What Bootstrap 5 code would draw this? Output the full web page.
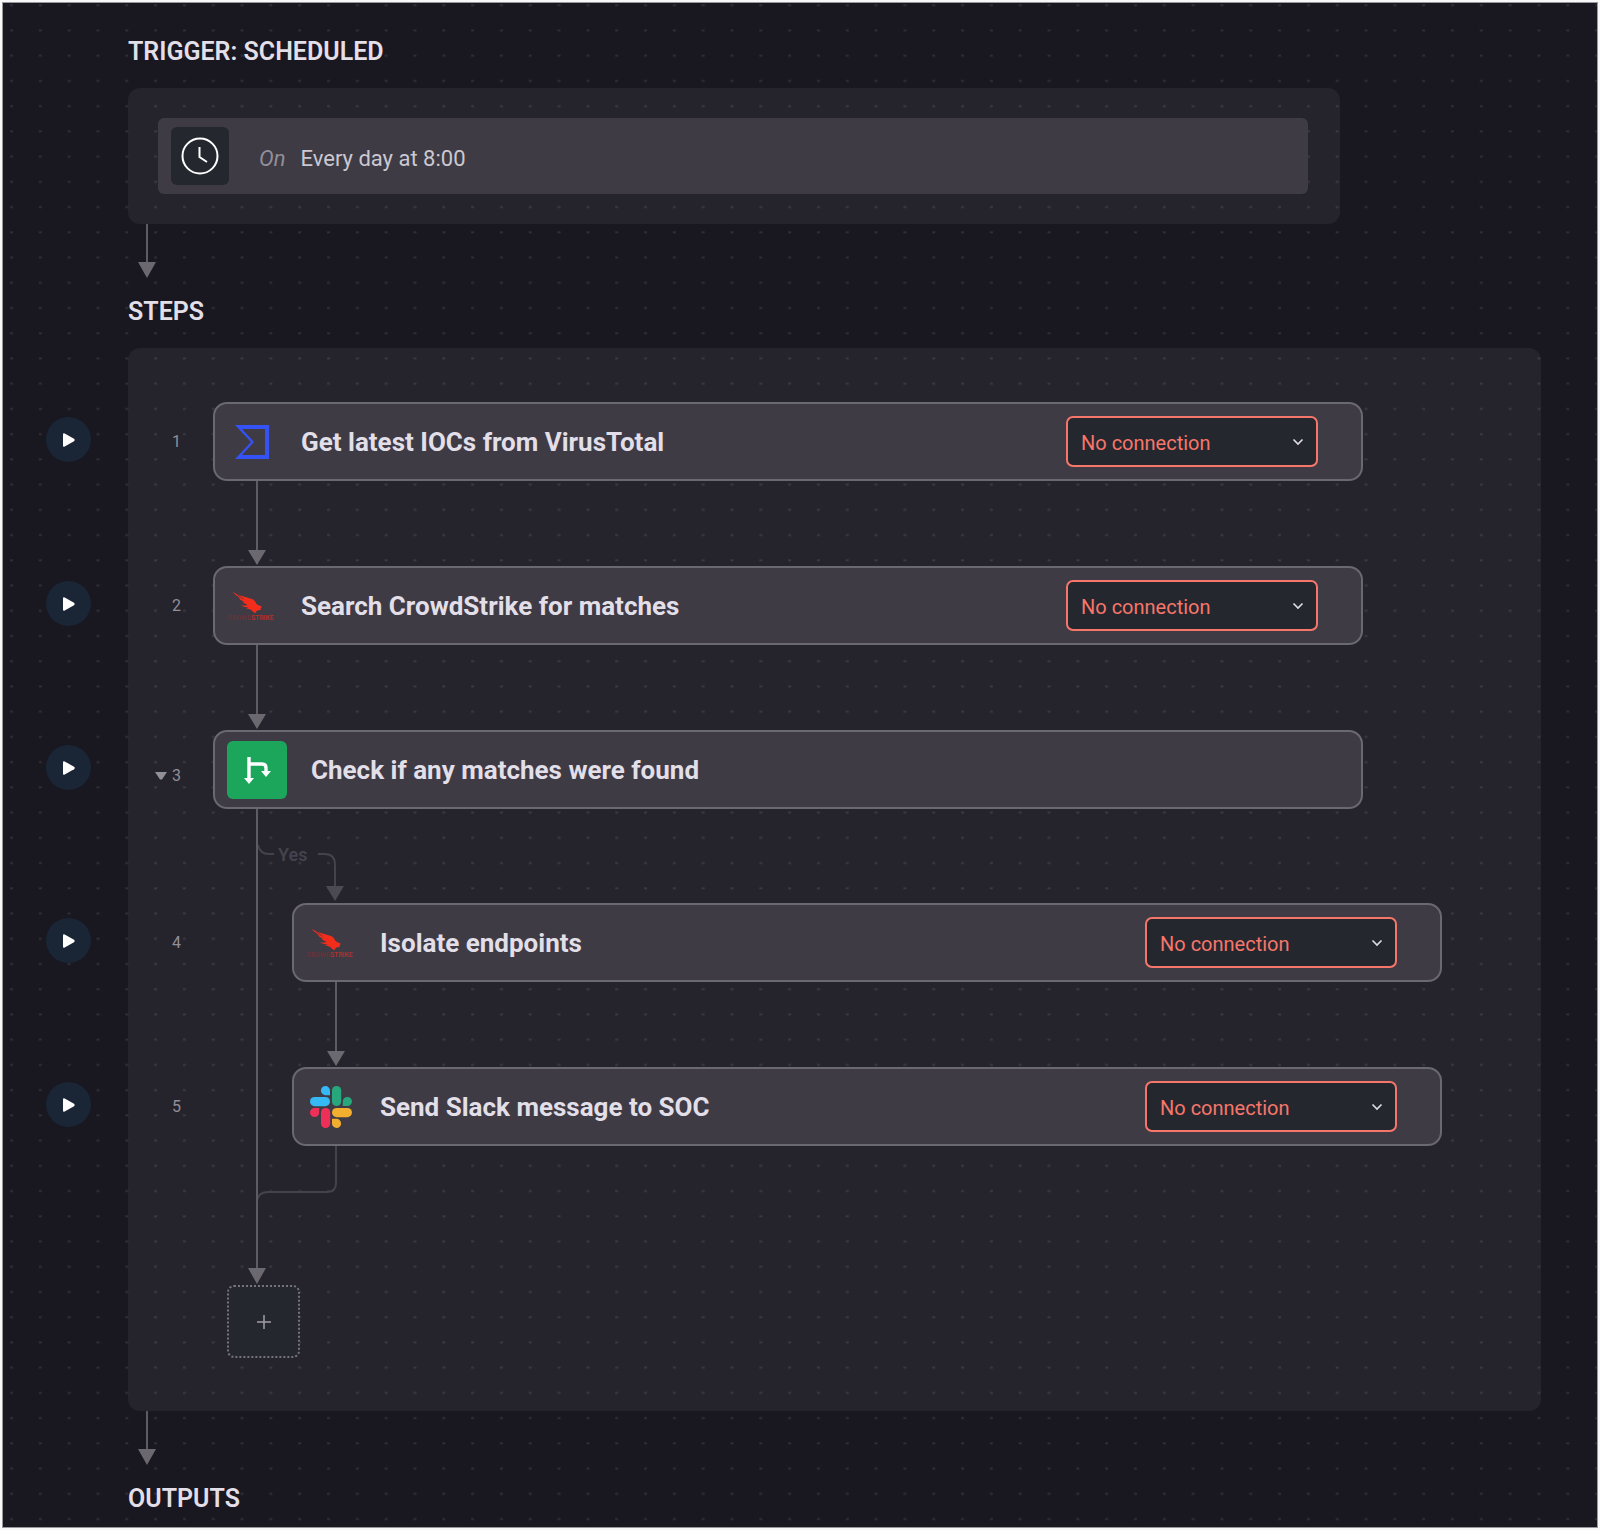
<!DOCTYPE html>
<html lang="en">
<head>
<meta charset="utf-8">
<meta name="viewport" content="width=device-width, initial-scale=1">
<title>Workflow editor</title>
<link href="https://cdn.jsdelivr.net/npm/bootstrap@5.3.0/dist/css/bootstrap.min.css" rel="stylesheet">
<style>
  :root {
    --ink: #e2dfe8;
    --muted: #918f98;
    --line: #5d5b64;
    --arrow: #6b696f;
    --faint: #44424c;
    --tile: #25272f;
    --alert: #f7766a;
  }
  body { background: #f8f8f8; padding: 2px; font-family: Roboto, "Liberation Sans", sans-serif; color: var(--ink); }
  .flow-canvas { background: #191720; border: 1px solid #98979b; min-height: calc(100vh - 4px); padding: 34px 56px 13px 125px; isolation: isolate; }
  .dot-grid { z-index: -1; }
  .flow-heading { font-size: 25px; line-height: 30px; font-weight: 600; margin-bottom: 21px; }
  .flow-panel { background: rgba(255, 255, 255, .055); border-radius: 12px; }
  .trigger-panel { padding: 30px 32px 30px 30px; margin-right: 201px; }
  .trigger-bar { background: #3e3b45; border-radius: 6px; height: 76px; padding: 0 13px; }
  .trigger-tile { width: 58px; height: 58px; border-radius: 6px; background: var(--tile); margin-right: 30px; }
  .trigger-text { font-size: 22px; line-height: 28px; color: #cbc8d1; padding-top: 5px; }
  .trigger-text em { color: var(--muted); margin-right: 15px; }
  .section-arrow { display: block; margin: 0 0 19px 10px; }
  .steps-panel { padding: 54px 0 53px; }
  .step-line { height: 79px; margin-left: -82px; padding-right: 178px; }
  .branch .step-line { padding-right: 99px; }
  .btn-play { width: 45px; height: 45px; padding: 0 0 0 1px; border: 0; background: #1a2636; margin-bottom: 4px; }
  .step-no { width: 90px; margin-right: 32px; font-size: 16px; line-height: 20px; color: var(--muted); }
  .branch .step-no { margin-right: 111px; }
  .step-toggle { font-size: 16px; line-height: 20px; color: var(--muted); padding: 13px 0 0; border: 0; gap: 5px; }
  .step-box { height: 79px; border: 2px solid #6a6871; border-radius: 14px; background: #3e3b45; padding: 0 43px 0 12px; gap: 24px; }
  .step-icon { width: 50px; }
  .step-icon-wide { width: 60px; height: 58px; border-radius: 6px; background: #1ca65c; }
  .step-title { font-size: 26px; line-height: 30px; font-weight: 700; margin: 0; }
  .conn-select {
    width: 252px; height: 51px; font-size: 20px; line-height: 24px; padding: 2px 36px 0 13px;
    color: var(--alert); border: 2px solid var(--alert); border-radius: 7px;
    background: var(--tile) url("data:image/svg+xml,%3Csvg xmlns='http://www.w3.org/2000/svg' viewBox='0 0 12 8'%3E%3Cpath d='M1.5 1.5 6 6l4.500-4.500' fill='none' stroke='%23dcdae2' stroke-width='1.700'/%3E%3C/svg%3E") no-repeat right 12px center / 12px 8px;
  }
  .step-link { display: block; margin-left: 120px; }
  .branch .step-link { margin-left: 199px; }
  .trunk { left: 128px; top: 0; bottom: 4px; width: 2px; background: var(--line); }
  .trunk-arrow { left: 120px; bottom: 1px; }
  .branch-yes { height: 94px; padding-left: 129px; }
  .branch-label { font-size: 18px; line-height: 22px; font-weight: 600; color: var(--faint); margin: 35px 11px 0 1px; }
  .branch-merge { display: block; margin-left: 128px; }
  .btn-add { width: 73px; height: 73px; margin-left: 99px; padding: 0; border: 2px dotted #75737c; border-radius: 7px; background: var(--tile); }
</style>
</head>
<body>
<svg width="0" height="0" class="position-absolute" aria-hidden="true">
  <defs>
    <symbol id="play" viewBox="0 0 14 16"><path d="M1 2.500Q1 .6 2.700 1.400L12 6.800Q13.600 8 12 9.200L2.700 14.600Q1 15.400 1 13.500Z" fill="#fff"/></symbol>
    <symbol id="arrow-down" viewBox="0 0 18 85"><path d="M9 0V70" stroke="#5d5b64" stroke-width="2"/><path d="M0 69H18L9 84Z" fill="#6b696f"/></symbol>
    <symbol id="arrow-short" viewBox="0 0 18 54"><path d="M9 0V40" stroke="#5d5b64" stroke-width="2"/><path d="M0 38H18L9 54Z" fill="#6b696f"/></symbol>
    <symbol id="falcon" viewBox="84 84 144 105">
      <path d="M97 95Q116 107 136 111L158 118Q166 122 169 131Q174 136 184 139Q186 144 181 146L183 150Q175 149 170 153L166 160Q158 156 154 150Q146 146 138 146L146 143Q130 142 121 136Q133 138 143 135Q133 131 127 125L133 126Q120 119 113 113L122 116Q107 106 97 95Z" fill="#f22d1c"/>
      <path d="M103 103L120 119M112 104L131 118M107 110L128 127" stroke="#3e3b45" stroke-width="2" fill="none"/>
      <text x="84" y="181" font-size="20" font-weight="500" fill="#6b3238">CROWD<tspan fill="#bb2f29">STRIKE</tspan></text>
    </symbol>
  </defs>
</svg>

<main class="flow-canvas position-relative">
  <svg class="dot-grid position-absolute top-0 start-0 w-100 h-100" aria-hidden="true">
    <defs><pattern id="dots" width="28.820" height="25.230" patternUnits="userSpaceOnUse"><rect x="7" y="1.300" width="3" height="1.900" fill="#302e37"/></pattern></defs>
    <rect width="100%" height="100%" fill="url(#dots)"/>
  </svg>

  <h2 class="flow-heading">TRIGGER: SCHEDULED</h2>
  <section class="flow-panel trigger-panel">
    <div class="trigger-bar d-flex align-items-center">
      <span class="trigger-tile d-flex align-items-center justify-content-center">
        <svg width="38" height="38" viewBox="0 0 38 38" fill="none" stroke="#fff" stroke-width="2" aria-hidden="true"><circle cx="19" cy="19" r="17.500"/><path d="M18.500 10V20L26 25"/></svg>
      </span>
      <span class="trigger-text"><em>On</em>Every day at 8:00</span>
    </div>
  </section>
  <svg class="section-arrow" width="18" height="54" aria-hidden="true"><use href="#arrow-short"/></svg>

  <h2 class="flow-heading">STEPS</h2>
  <section class="flow-panel steps-panel">
    <div class="step-line d-flex align-items-center">
      <button type="button" class="btn btn-play rounded-circle flex-shrink-0" aria-label="Run step 1"><svg width="14" height="16"><use href="#play"/></svg></button>
      <span class="step-no text-end flex-shrink-0">1</span>
      <div class="step-box d-flex align-items-center flex-grow-1">
        <span class="step-icon d-flex justify-content-center"><svg width="34" height="34" viewBox="0 0 34 34" aria-hidden="true"><path d="M0 0H34V34H0L16 17ZM7 4L19 17L7 30H30V4Z" fill="#3553f5" fill-rule="evenodd"/></svg></span>
        <h3 class="step-title">Get latest IOCs from VirusTotal</h3>
        <select class="conn-select form-select ms-auto" aria-label="VirusTotal connection"><option>No connection</option></select>
      </div>
    </div>
    <svg class="step-link" width="18" height="85" aria-hidden="true"><use href="#arrow-down"/></svg>

    <div class="step-line d-flex align-items-center">
      <button type="button" class="btn btn-play rounded-circle flex-shrink-0" aria-label="Run step 2"><svg width="14" height="16"><use href="#play"/></svg></button>
      <span class="step-no text-end flex-shrink-0">2</span>
      <div class="step-box d-flex align-items-center flex-grow-1">
        <span class="step-icon d-flex justify-content-center"><svg width="48" height="35"><use href="#falcon"/></svg></span>
        <h3 class="step-title">Search CrowdStrike for matches</h3>
        <select class="conn-select form-select ms-auto" aria-label="CrowdStrike search connection"><option>No connection</option></select>
      </div>
    </div>
    <svg class="step-link" width="18" height="85" aria-hidden="true"><use href="#arrow-down"/></svg>

    <div class="step-line d-flex align-items-center">
      <button type="button" class="btn btn-play rounded-circle flex-shrink-0" aria-label="Run step 3"><svg width="14" height="16"><use href="#play"/></svg></button>
      <div class="step-no d-flex justify-content-end flex-shrink-0">
        <button type="button" class="btn step-toggle d-flex align-items-center" aria-expanded="true"><svg width="12" height="8" viewBox="0 0 12 8" aria-hidden="true"><path d="M0 0H12L7 7.500H5Z" fill="#918f98"/></svg>3</button>
      </div>
      <div class="step-box d-flex align-items-center flex-grow-1">
        <span class="step-icon-wide d-flex align-items-center justify-content-center"><svg width="28" height="28" viewBox="0 0 28 28" aria-hidden="true"><path d="M6 1V23M6 8H19Q23 8 23 12V17" fill="none" stroke="#fff" stroke-width="3.400"/><path d="M1 22H11L6 28ZM18 15H28L23 21Z" fill="#fff"/></svg></span>
        <h3 class="step-title">Check if any matches were found</h3>
      </div>
    </div>

    <div class="branch position-relative">
      <span class="trunk position-absolute"></span>
      <svg class="trunk-arrow position-absolute" width="18" height="16" aria-hidden="true"><path d="M0 0H18L9 16Z" fill="#6b696f"/></svg>
      <div class="branch-yes d-flex align-items-start">
        <svg width="20" height="94" viewBox="0 0 20 94" fill="none" aria-hidden="true"><path d="M1 36Q3 45 12 45H17" stroke="#44424c" stroke-width="2"/></svg>
        <span class="branch-label">Yes</span>
        <svg width="30" height="94" viewBox="0 0 30 94" aria-hidden="true"><path d="M0 45H7Q17 45 17 56V80" fill="none" stroke="#44424c" stroke-width="2"/><path d="M8 77H26L17 92Z" fill="#4b4952"/></svg>
      </div>
      <div class="step-line d-flex align-items-center">
        <button type="button" class="btn btn-play rounded-circle flex-shrink-0" aria-label="Run step 4"><svg width="14" height="16"><use href="#play"/></svg></button>
        <span class="step-no text-end flex-shrink-0">4</span>
        <div class="step-box d-flex align-items-center flex-grow-1">
          <span class="step-icon d-flex justify-content-center"><svg width="48" height="35"><use href="#falcon"/></svg></span>
          <h3 class="step-title">Isolate endpoints</h3>
          <select class="conn-select form-select ms-auto" aria-label="CrowdStrike isolation connection"><option>No connection</option></select>
        </div>
      </div>
      <svg class="step-link" width="18" height="85" aria-hidden="true"><use href="#arrow-down"/></svg>
      <div class="step-line d-flex align-items-center">
        <button type="button" class="btn btn-play rounded-circle flex-shrink-0" aria-label="Run step 5"><svg width="14" height="16"><use href="#play"/></svg></button>
        <span class="step-no text-end flex-shrink-0">5</span>
        <div class="step-box d-flex align-items-center flex-grow-1">
          <span class="step-icon d-flex justify-content-center">
            <svg width="42" height="42" viewBox="0 0 42 42" aria-hidden="true">
              <path d="M15.500 0A4.600 4.600 0 0 0 15.500 9.200H20V4.600A4.600 4.600 0 0 0 15.500 0Z" fill="#36b8f4"/><rect x="0" y="11" width="20" height="9.200" rx="4.600" fill="#36b8f4"/>
              <path d="M42 15.500A4.600 4.600 0 0 0 32.800 15.500V20H37.400A4.600 4.600 0 0 0 42 15.500Z" fill="#28a77c"/><rect x="22" y="0" width="9.200" height="20" rx="4.600" fill="#28a77c"/>
              <path d="M26.500 42A4.600 4.600 0 0 0 26.500 32.800H22V37.400A4.600 4.600 0 0 0 26.500 42Z" fill="#f2ae2e"/><rect x="22" y="22" width="20" height="9.200" rx="4.600" fill="#f2ae2e"/>
              <path d="M0 26.500A4.600 4.600 0 0 0 9.200 26.500V22H4.600A4.600 4.600 0 0 0 0 26.500Z" fill="#ee3059"/><rect x="11" y="22" width="9.200" height="20" rx="4.600" fill="#ee3059"/>
            </svg>
          </span>
          <h3 class="step-title">Send Slack message to SOC</h3>
          <select class="conn-select form-select ms-auto" aria-label="Slack connection"><option>No connection</option></select>
        </div>
      </div>
      <svg class="branch-merge" width="90" height="139" viewBox="0 0 90 139" fill="none" aria-hidden="true"><path d="M80 0V37Q80 46 71 46H12Q1 46 1 57V93" stroke="#44424c" stroke-width="2"/><path d="M1 57V93" stroke="#66646d" stroke-width="2"/></svg>
    </div>

    <button type="button" class="btn btn-add d-flex align-items-center justify-content-center" aria-label="Add step"><svg width="14" height="14" viewBox="0 0 14 14" stroke="#a09ea7" stroke-width="1.500" aria-hidden="true"><path d="M7 0V14M0 7H14"/></svg></button>
  </section>
  <svg class="section-arrow" width="18" height="54" aria-hidden="true"><use href="#arrow-short"/></svg>

  <h2 class="flow-heading mb-0">OUTPUTS</h2>
</main>
<script src="https://cdn.jsdelivr.net/npm/bootstrap@5.3.0/dist/js/bootstrap.bundle.min.js"></script>
</body>
</html>
